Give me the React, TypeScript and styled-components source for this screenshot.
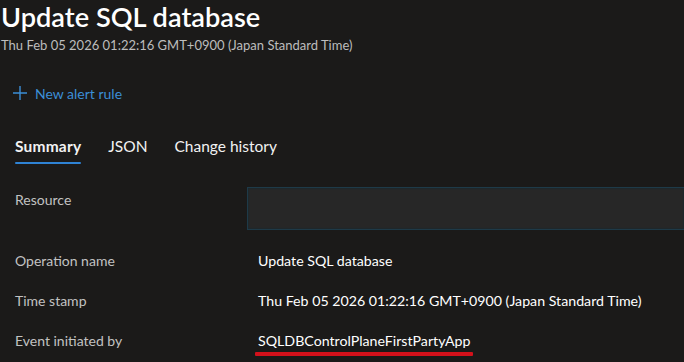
import React from 'react';
import styled, { createGlobalStyle } from 'styled-components';

const GlobalStyle = createGlobalStyle`
    html, body {
        margin: 0;
        padding: 0;
        background: #1b1a19;
        overflow: hidden;
    }
    body {
        font-family: "Segoe UI", Lato, "Noto Sans", sans-serif;
        color: #ffffff;
    }
`;

const Page = styled.div`
    width: 684px;
    height: 362px;
    display: flex;
    flex-direction: column;
    background: #1b1a19;
`;

const Header = styled.div`
    display: flex;
    flex-direction: column;
    padding-left: 1px;
`;

const Title = styled.h1`
    margin: 0;
    font-size: 27.2px;
    line-height: 34px;
    font-weight: 600;
    color: #ffffff;
`;

const Subtitle = styled.div`
    font-size: 13px;
    line-height: 18px;
    color: #bdbdbd;
    margin-top: 2px;
`;

const Toolbar = styled.div`
    display: flex;
    align-items: center;
    gap: 7px;
    margin-top: 27px;
    padding-left: 12px;
    height: 24px;
    color: #3b8ed6;
    font-size: 14px;
`;

const Tabs = styled.div`
    display: flex;
    gap: 27px;
    margin-top: 31px;
    padding-left: 15px;
`;

const Tab = styled.div<{ $active?: boolean }>`
    position: relative;
    font-size: 15.5px;
    line-height: 20px;
    padding-bottom: 8px;
    font-weight: ${p => (p.$active ? 700 : 400)};
    letter-spacing: ${p => (p.$active ? '0.2px' : '0')};
    color: #f2f2f2;
    &::after {
        content: '';
        display: ${p => (p.$active ? 'block' : 'none')};
        position: absolute;
        left: 0;
        right: 0;
        bottom: 0;
        height: 2px;
        background: #2f83d4;
        border-radius: 1px;
    }
`;

const Details = styled.div`
    display: grid;
    grid-template-columns: 232px 1fr;
    margin-top: 23px;
    padding-left: 15px;
`;

const Label = styled.div<{ $top?: boolean }>`
    height: ${p => (p.$top ? 43 : 40)}px;
    font-size: 14px;
    color: #c2c2c2;
    display: flex;
    align-items: ${p => (p.$top ? 'flex-start' : 'center')};
    padding-top: ${p => (p.$top ? '4px' : '0')};
    box-sizing: border-box;
`;

const Value = styled.div`
    height: 40px;
    font-size: 14.2px;
    color: #ffffff;
    display: flex;
    align-items: center;
    padding-left: 11px;
    box-sizing: border-box;
`;

const Gap = styled.div`
    grid-column: 1 / -1;
    height: 10px;
`;

const ResourceBox = styled.div`
    height: 43px;
    box-sizing: border-box;
    background: #272727;
    border: 1px solid #1e3a48;
    box-shadow: inset 0 0 2px #0f2a38;
    border-right: none;
`;

const Marked = styled.span`
    position: relative;
    &::after {
        content: '';
        position: absolute;
        left: -3px;
        right: -3px;
        bottom: -7px;
        height: 4px;
        background: #d3111b;
        border-radius: 1px;
    }
`;

const PlusIcon = () => (
    <svg width="16" height="16" viewBox="0 0 16 16" fill="none">
        <path d="M8 1v14M1 8h14" stroke="#3b8ed6" strokeWidth="1.4" />
    </svg>
);

const App = () => {
    const stamp = 'Thu Feb 05 2026 01:22:16 GMT+0900 (Japan Standard Time)';

    return (
        <Page>
            <GlobalStyle />
            <Header>
                <Title>Update SQL database</Title>
                <Subtitle>{stamp}</Subtitle>
            </Header>
            <Toolbar>
                <PlusIcon />
                New alert rule
            </Toolbar>
            <Tabs>
                <Tab $active>Summary</Tab>
                <Tab>JSON</Tab>
                <Tab>Change history</Tab>
            </Tabs>
            <Details>
                <Label $top>Resource</Label>
                <ResourceBox />
                <Gap />
                <Label>Operation name</Label>
                <Value>Update SQL database</Value>
                <Label>Time stamp</Label>
                <Value>{stamp}</Value>
                <Label>Event initiated by</Label>
                <Value>
                    <Marked>SQLDBControlPlaneFirstPartyApp</Marked>
                </Value>
            </Details>
        </Page>
    );
};

export default App;
